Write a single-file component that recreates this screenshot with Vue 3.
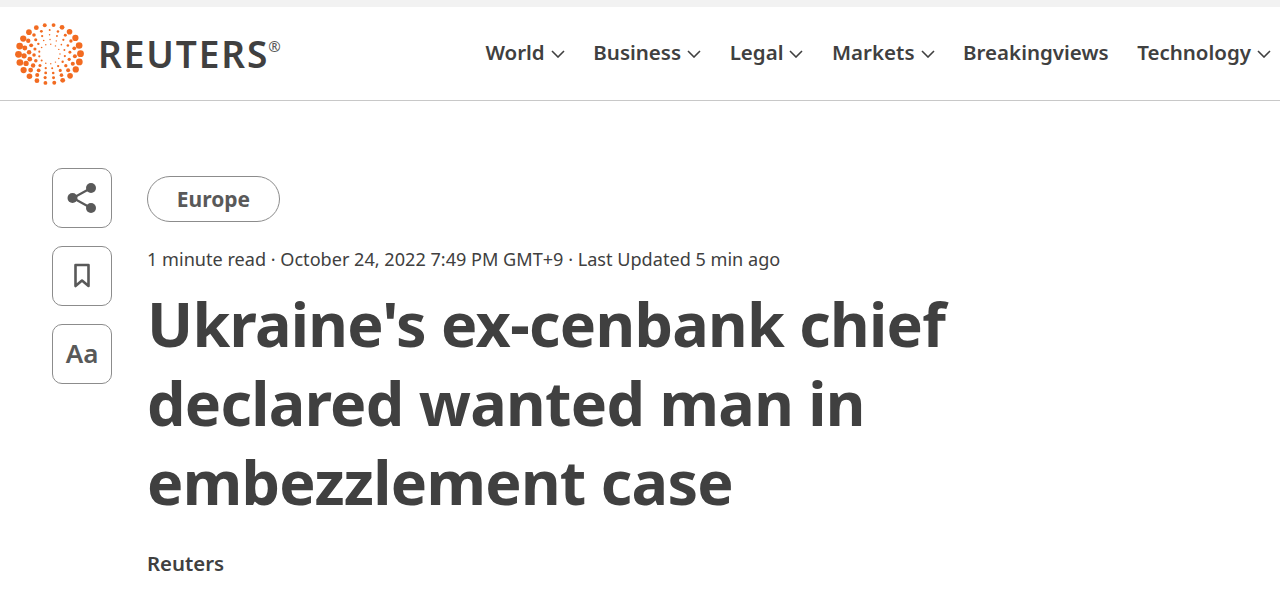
<script setup>
const nav = [
  { label: 'World', caret: true },
  { label: 'Business', caret: true },
  { label: 'Legal', caret: true },
  { label: 'Markets', caret: true },
  { label: 'Breakingviews', caret: false },
  { label: 'Technology', caret: true },
]
const rings = [
  { r: 10.5, n: 13, s: 0.9, bias: 0.3 },
  { r: 15.5, n: 15, s: 1.4, bias: 0.35 },
  { r: 20.5, n: 17, s: 1.9, bias: 0.3 },
  { r: 25.5, n: 19, s: 2.3, bias: 0.2 },
  { r: 31, n: 22, s: 3.4, bias: 0 },
]
const dots = []
rings.forEach((ring, i) => {
  for (let k = 0; k < ring.n; k++) {
    const a = (k / ring.n) * Math.PI * 2 + i * 0.14
    const f = 0.5 + 0.5 * Math.abs(Math.cos(a))
    const lean = 1 + ring.bias * Math.cos(a - Math.PI * 0.75)
    dots.push({
      x: 34.5 + ring.r * Math.cos(a),
      y: 32 + ring.r * 0.94 * Math.sin(a),
      r: Math.max(0.7, ring.s * f * lean),
    })
  }
})
</script>

<template>
  <div class="page">
    <div class="strip"></div>
    <header class="header">
      <div class="brand">
        <svg class="mark" width="70" height="64" viewBox="0 0 70 64">
          <circle v-for="(d, i) in dots" :key="i" :cx="d.x" :cy="d.y" :r="d.r" fill="#f26b21" />
        </svg>
        <span class="word">REUTERS</span><span class="reg">®</span>
      </div>
      <nav class="nav">
        <a v-for="item in nav" :key="item.label" class="nav-item">
          {{ item.label }}
          <svg v-if="item.caret" class="caret" width="14" height="8" viewBox="0 0 14 8">
            <path d="M1 1l6 6 6-6" fill="none" stroke="#404040" stroke-width="1.6" />
          </svg>
        </a>
      </nav>
    </header>
    <main class="main">
      <aside class="tools">
        <button class="tool">
          <svg width="34" height="34" viewBox="0 0 34 34">
            <path d="M26 7L8 17l18 10" fill="none" stroke="#595959" stroke-width="2.2" />
            <circle cx="26" cy="7" r="5" fill="#595959" />
            <circle cx="7.500" cy="17" r="5" fill="#595959" />
            <circle cx="26" cy="27" r="5" fill="#595959" />
          </svg>
        </button>
        <button class="tool">
          <svg width="18" height="26" viewBox="0 0 18 26">
            <path d="M2.500 2h13v21L9 17.500 2.500 23z" fill="none" stroke="#595959" stroke-width="2.600" stroke-linejoin="round" />
          </svg>
        </button>
        <button class="tool aa">Aa</button>
      </aside>
      <article class="article">
        <span class="tag">Europe</span>
        <p class="meta">1 minute read · October 24, 2022 7:49 PM GMT+9 · Last Updated 5 min ago</p>
        <h1 class="title">Ukraine's ex-cenbank chief declared wanted man in embezzlement case</h1>
        <p class="byline">Reuters</p>
      </article>
    </main>
  </div>
</template>

<style>
html, body { margin: 0; background: #fff; overflow: hidden; }
</style>

<style scoped>
.page {
  height: 591px;
  overflow: hidden;
  font-family: "Noto Sans", "Open Sans", sans-serif;
  color: #404040;
  background: #fff;
}
.strip { height: 7px; background: #f2f2f2; }
.header {
  height: 94px;
  box-sizing: border-box;
  border-bottom: 1px solid #c8c8c8;
  display: flex;
  align-items: center;
  justify-content: space-between;
  padding: 0 9px 0 15px;
}
.brand { display: flex; align-items: center; }
.mark { display: block; margin-right: 14px; }
.word {
  font-size: 37px;
  font-weight: 600;
  letter-spacing: 1.9px;
  line-height: 1;
  margin-left: -1px;
}
.reg { font-size: 15px; align-self: flex-start; margin: 14px 0 0 -1px; color: #595959; }
.nav { display: flex; gap: 28.600px; margin-bottom: 3px; }
.nav-item {
  display: flex;
  align-items: center;
  gap: 6px;
  font-size: 20.500px;
  font-weight: 600;
  white-space: nowrap;
}
.caret { margin-top: 3px; }
.main { display: flex; padding: 67px 0 0 52px; gap: 35px; }
.tools { display: flex; flex-direction: column; gap: 18px; }
.tool {
  width: 60px;
  height: 60px;
  box-sizing: border-box;
  border: 1px solid #8c8c8c;
  border-radius: 10px;
  background: #fff;
  padding: 0;
  display: flex;
  align-items: center;
  justify-content: center;
}
.aa {
  font-family: inherit;
  font-size: 26px;
  font-weight: 600;
  color: #595959;
  padding-bottom: 2px;
}
.article { width: 860px; display: flex; flex-direction: column; align-items: flex-start; padding-top: 8px; }
.tag {
  width: 133px;
  height: 46px;
  box-sizing: border-box;
  border: 1px solid #8c8c8c;
  border-radius: 23px;
  display: flex;
  align-items: center;
  justify-content: center;
  font-size: 21px;
  font-weight: 700;
  color: #595959;
}
.meta { margin: 24px 0 0; font-size: 18.100px; line-height: 27px; white-space: nowrap; }
.title {
  margin: 11px 0 0;
  font-size: 61px;
  font-weight: 700;
  letter-spacing: -0.7px;
  line-height: 79px;
  color: #404040;
}
.byline { margin: 28px 0 0; font-size: 20.400px; font-weight: 600; line-height: 28px; }
</style>
